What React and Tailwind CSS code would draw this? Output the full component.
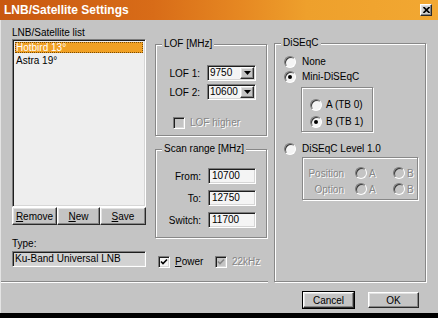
import React from 'react';

const sunken =
  'border border-t-[#7c7c7c] border-l-[#7c7c7c] border-b-white border-r-white shadow-[inset_1px_1px_0_#1e1e1e,inset_-1px_-1px_0_#d6d6d6]';
const raised =
  'border border-t-white border-l-white border-b-[#2a2a2a] border-r-[#2a2a2a] shadow-[inset_-1px_-1px_0_#868686,inset_1px_1px_0_#e2e2e2]';
const etched = 'border border-[#888888] shadow-[inset_1px_1px_0_#fff,1px_1px_0_#fff]';
const dim = 'text-[#868686] [text-shadow:1px_1px_0_#fff]';

function Group({ title, className = '', children }) {
  return (
    <div className={`relative ${etched} ${className}`}>
      {title && (
        <span className="absolute -top-[7px] left-[6px] px-[2px] bg-[#c4c4c4] leading-[12px]">
          {title}
        </span>
      )}
      {children}
    </div>
  );
}

function Button({ className = '', def, children }) {
  return (
    <div
      className={`flex items-center justify-center bg-[#c4c4c4] ${raised} ${
        def ? 'outline outline-1 outline-black' : ''
      } ${className}`}
    >
      {children}
    </div>
  );
}

function Radio({ checked, disabled }) {
  return (
    <span
      className={`flex items-center justify-center w-[12px] h-[12px] shrink-0 rounded-full border border-t-[#7c7c7c] border-l-[#7c7c7c] border-b-white border-r-white shadow-[inset_1px_1px_0_#3a3a3a] ${
        disabled ? 'bg-[#c4c4c4]' : 'bg-[#f4f4f4]'
      }`}
    >
      {checked && <span className="w-[4px] h-[4px] rounded-full bg-black" />}
    </span>
  );
}

function Check({ checked, disabled }) {
  return (
    <span
      className={`flex items-center justify-center w-[12px] h-[12px] shrink-0 ${sunken} ${
        disabled ? 'bg-[#c4c4c4]' : 'bg-[#f4f4f4]'
      }`}
    >
      {checked && (
        <svg width="8" height="8" viewBox="0 0 8 8">
          <path
            d="M1 3.5 L3 5.5 L7 1.5"
            fill="none"
            stroke={disabled ? '#868686' : '#000'}
            strokeWidth="1.6"
          />
        </svg>
      )}
    </span>
  );
}

function Combo({ value }) {
  return (
    <div className={`flex w-[49px] h-[16px] bg-[#f4f4f4] ${sunken}`}>
      <span className="flex-1 pl-[2px] leading-[14px]">{value}</span>
      <span className={`flex items-center justify-center w-[14px] m-[1px] bg-[#c4c4c4] ${raised}`}>
        <svg width="7" height="4" viewBox="0 0 7 4">
          <path d="M0 0 H7 L3.5 4 Z" fill="#000" />
        </svg>
      </span>
    </div>
  );
}

function Field({ value, className = '' }) {
  return (
    <div className={`h-[16px] bg-[#f4f4f4] ${sunken} ${className}`}>
      <span className="block pl-[3px] leading-[14px]">{value}</span>
    </div>
  );
}

function LabeledRow({ label, children, className = '' }) {
  return (
    <div className={`flex items-center justify-end gap-[7px] pr-[10px] ${className}`}>
      <span>{label}</span>
      {children}
    </div>
  );
}

export default function App() {
  return (
    <div className="w-[438px] h-[318px] flex flex-col bg-black overflow-hidden font-['Liberation_Sans',Arial,sans-serif] text-[10px] text-black">
      {/* title bar */}
      <div className="h-[20px] flex items-center justify-between pl-[4px] pr-[6px] bg-[linear-gradient(90deg,#c85810_0%,#d86c18_35%,#e68822_55%,#eea02c_70%,#f2a832_100%)]">
        <span className="text-white font-bold text-[12px] leading-none">LNB/Satellite Settings</span>
        <span className={`flex items-center justify-center w-[12px] h-[12px] bg-[#d0d0d0] ${raised}`}>
          <svg width="7" height="6" viewBox="0 0 7 6">
            <path d="M0.5 0 L6.5 6 M6.5 0 L0.5 6" stroke="#000" strokeWidth="1.6" />
          </svg>
        </span>
      </div>

      {/* body */}
      <div className="h-[293px] flex flex-col bg-[#c4c4c4] border-l border-[#e4e4e4]">
        <div className="flex items-start pt-[7px]">
          <div className="flex flex-col w-[267px] h-[256px]">
            <div className="flex items-start pl-[11px]">
              {/* left column */}
              <div className="flex flex-col w-[134px]">
                <span className="h-[12px] leading-[12px]">LNB/Satellite list</span>
                <div className={`h-[168px] bg-[#eeeeee] p-[2px] ${sunken}`}>
                  <div className="h-[11px] leading-[11px] px-[1px] bg-[#f0a024] text-white outline outline-1 outline-dotted outline-[#7a4a00] -outline-offset-1">
                    Hotbird 13°
                  </div>
                  <div className="h-[11px] leading-[11px] px-[1px] mt-[2px]">Astra 19°</div>
                </div>
                <div className="flex h-[18px]">
                  <Button className="w-[45px]">
                    <span><u>R</u>emove</span>
                  </Button>
                  <Button className="w-[43px]">
                    <span><u>N</u>ew</span>
                  </Button>
                  <Button className="w-[46px]">
                    <span><u>S</u>ave</span>
                  </Button>
                </div>
                <span className="mt-[13px] h-[12px] leading-[12px]">Type:</span>
                <div className={`mt-[1px] h-[16px] bg-[#d2d2d2] ${sunken}`}>
                  <span className="block pl-[2px] leading-[14px]">Ku-Band Universal LNB</span>
                </div>
              </div>

              {/* middle column */}
              <div className="flex flex-col ml-[9px] w-[112px]">
                <Group title="LOF [MHz]" className="mt-[17px] h-[92px] pt-[20px]">
                  <LabeledRow label="LOF 1:">
                    <Combo value="9750" />
                  </LabeledRow>
                  <LabeledRow label="LOF 2:" className="mt-[3px]">
                    <Combo value="10600" />
                  </LabeledRow>
                  <div className="flex items-center gap-[5px] mt-[15px] pl-[17px]">
                    <Check disabled />
                    <span className={dim}>LOF higher</span>
                  </div>
                </Group>
                <Group title="Scan range [MHz]" className="mt-[13px] h-[89px] pt-[18px]">
                  <LabeledRow label="From:">
                    <Field value="10700" className="w-[48px]" />
                  </LabeledRow>
                  <LabeledRow label="To:" className="mt-[6px]">
                    <Field value="12750" className="w-[48px]" />
                  </LabeledRow>
                  <LabeledRow label="Switch:" className="mt-[6px]">
                    <Field value="11700" className="w-[48px]" />
                  </LabeledRow>
                </Group>
                <div className="flex items-center h-[13px] mt-[17px] pl-[3px]">
                  <Check checked />
                  <span className="ml-[5px] w-[40px]"><u>P</u>ower</span>
                  <Check checked disabled />
                  <span className={`ml-[5px] ${dim}`}>22kHz</span>
                </div>
              </div>
            </div>
            <div className="mt-auto h-[2px] border-t border-[#888888] border-b border-b-white" />
          </div>

          {/* DiSEqC */}
          <Group title="DiSEqC" className="ml-[6px] mt-[16px] w-[152px] h-[239px] pt-[10px] pl-[9px] flex flex-col">
            <div className="flex items-center gap-[6px] h-[15px]">
              <Radio />
              <span>None</span>
            </div>
            <div className="flex items-center gap-[6px] h-[15px]">
              <Radio checked />
              <span>Mini-DiSEqC</span>
            </div>
            <Group className="mt-[3px] ml-[17px] w-[72px] h-[45px] pt-[9px] pl-[8px] flex flex-col gap-[2px]">
              <div className="flex items-center gap-[4px] h-[15px]">
                <Radio />
                <span>A (TB 0)</span>
              </div>
              <div className="flex items-center gap-[4px] h-[15px]">
                <Radio checked />
                <span>B (TB 1)</span>
              </div>
            </Group>
            <div className="flex items-center gap-[6px] h-[15px] mt-[9px]">
              <Radio />
              <span>DiSEqC Level 1.0</span>
            </div>
            <Group className="mt-[1px] ml-[18px] w-[116px] h-[43px] pt-[8px] flex flex-col gap-[2px]">
              {['Position', 'Option'].map((label) => (
                <div key={label} className="flex items-center h-[14px]">
                  <span className={`w-[41px] text-right ${dim}`}>{label}</span>
                  <span className="ml-[11px]"><Radio disabled /></span>
                  <span className={`ml-[2px] w-[24px] ${dim}`}>A</span>
                  <Radio disabled />
                  <span className={`ml-[2px] ${dim}`}>B</span>
                </div>
              ))}
            </Group>
          </Group>
        </div>

        {/* dialog buttons */}
        <div className="flex justify-end gap-[14px] pr-[19px] mt-[9px]">
          <Button def className="w-[51px] h-[16px]">Cancel</Button>
          <Button className="w-[51px] h-[16px]">OK</Button>
        </div>
      </div>
    </div>
  );
}
